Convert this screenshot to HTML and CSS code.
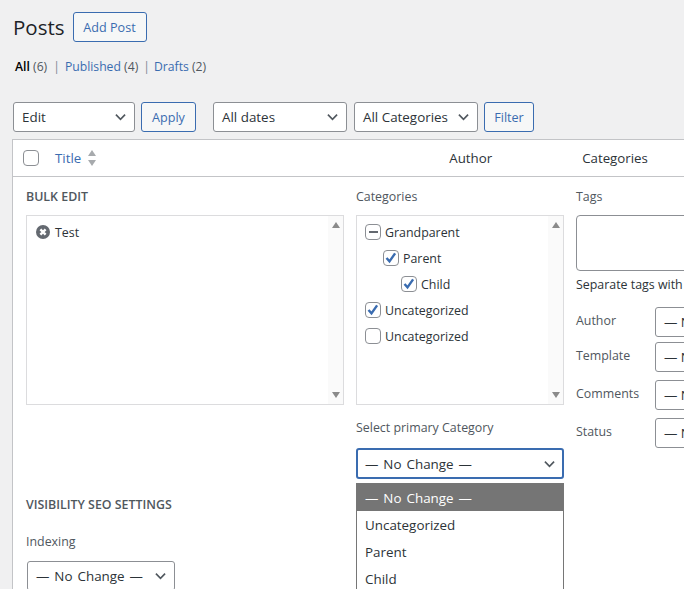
FILE: index.html
```html
<!DOCTYPE html>
<html lang="en">
<head>
    <meta charset="UTF-8">
    <meta name="viewport" content="width=device-width, initial-scale=1.0">
    <title>Posts</title>
    <link rel="stylesheet" href="styles.css">
</head>
<body>
    <div class="wrap">
        <div class="page-head">
            <h1>Posts</h1>
            <a class="btn add-post" href="#">Add Post</a>
        </div>

        <ul class="subsubsub">
            <li class="current">All <span class="count">(6)</span></li>
            <li class="sep">|</li>
            <li><a href="#">Published</a> <span class="count">(4)</span></li>
            <li class="sep sep-last">|</li>
            <li><a href="#">Drafts</a> <span class="count">(2)</span></li>
        </ul>

        <div class="tablenav">
            <div class="select select-edit">Edit<svg class="chev" viewBox="0 0 12 8"><path d="M1 1.5l5 5 5-5"/></svg></div>
            <a class="btn btn-apply" href="#">Apply</a>
            <div class="select select-dates">All dates<svg class="chev" viewBox="0 0 12 8"><path d="M1 1.5l5 5 5-5"/></svg></div>
            <div class="select select-cats">All Categories<svg class="chev" viewBox="0 0 12 8"><path d="M1 1.5l5 5 5-5"/></svg></div>
            <a class="btn btn-filter" href="#">Filter</a>
        </div>

        <div class="posts-table">
            <div class="table-head">
                <span class="check"></span>
                <a class="col-title" href="#">Title</a>
                <svg class="sort" viewBox="0 0 10 18"><path d="M5 1l4 6H1z"/><path d="M5 17L1 11h8z"/></svg>
                <span class="col-author">Author</span>
                <span class="col-cats">Categories</span>
            </div>

            <div class="bulk-edit">
                <div class="bulk-col col-left">
                    <h4>BULK EDIT</h4>
                    <div class="scroll-box title-box">
                        <div class="bulk-title">
                            <svg class="remove" viewBox="0 0 14 14"><circle cx="7" cy="7" r="7"/><path d="M4.4 4.4l5.2 5.2M9.6 4.4l-5.2 5.2"/></svg>
                            Test
                        </div>
                        <div class="scrollbar"><span class="arrow-up"></span><span class="arrow-down"></span></div>
                    </div>
                </div>

                <div class="bulk-col col-mid">
                    <div class="field-label">Categories</div>
                    <div class="scroll-box cat-box">
                        <ul class="cat-list">
                            <li><span class="check dash"></span>Grandparent</li>
                            <li class="level-1"><span class="check"><svg viewBox="0 0 16 16"><path d="M3.5 8l3 3.4 5.6-8"/></svg></span>Parent</li>
                            <li class="level-2"><span class="check"><svg viewBox="0 0 16 16"><path d="M3.5 8l3 3.4 5.6-8"/></svg></span>Child</li>
                            <li><span class="check"><svg viewBox="0 0 16 16"><path d="M3.5 8l3 3.4 5.6-8"/></svg></span>Uncategorized</li>
                            <li><span class="check"></span>Uncategorized</li>
                        </ul>
                        <div class="scrollbar"><span class="arrow-up"></span><span class="arrow-down"></span></div>
                    </div>
                </div>

                <div class="bulk-col col-right">
                    <div class="field-label">Tags</div>
                    <div class="tags-input"></div>
                    <div class="tags-hint">Separate tags with commas</div>
                    <div class="meta-row row-author"><span>Author</span><div class="select mini">— No Change —</div></div>
                    <div class="meta-row row-template"><span>Template</span><div class="select mini">— No Change —</div></div>
                    <div class="meta-row row-comments"><span>Comments</span><div class="select mini">— No Change —</div></div>
                    <div class="meta-row row-status"><span>Status</span><div class="select mini">— No Change —</div></div>
                </div>

                <div class="primary-cat">
                    <div class="field-label">Select primary Category</div>
                    <div class="select select-primary no-change">— No Change —<svg class="chev" viewBox="0 0 12 8"><path d="M1 1.5l5 5 5-5"/></svg></div>
                    <ul class="dropdown">
                        <li class="active no-change">— No Change —</li>
                        <li>Uncategorized</li>
                        <li>Parent</li>
                        <li>Child</li>
                    </ul>
                </div>

                <div class="seo-settings">
                    <h4>VISIBILITY SEO SETTINGS</h4>
                    <div class="field-label">Indexing</div>
                    <div class="select select-index no-change">— No Change —<svg class="chev" viewBox="0 0 12 8"><path d="M1 1.5l5 5 5-5"/></svg></div>
                </div>
            </div>
        </div>
    </div>
</body>
</html>
```

FILE: styles.css
```css
html, body {
    margin: 0;
    height: 589px;
    overflow: hidden;
}

body {
    background-color: #f0f0f1;
    color: #1d2327;
    font-family: "Open Sans", "Noto Sans", sans-serif;
    font-size: 13px;
}

a {
    color: #3a6cb0;
    text-decoration: none;
}

ul {
    list-style: none;
    margin: 0;
    padding: 0;
}

.wrap {
    width: 900px;
    padding: 12px 0 0 13px;
}

/* Header */
.page-head {
    display: flex;
    align-items: center;
    gap: 8px;
    height: 30px;
}

h1 {
    margin: 0;
    font-size: 20.5px;
    font-weight: 400;
}

.btn {
    box-sizing: border-box;
    display: flex;
    align-items: center;
    justify-content: center;
    height: 30px;
    border: 1px solid #3a6cb0;
    border-radius: 3px;
    background-color: #f6f7f7;
    font-size: 12.6px;
}

.add-post {
    width: 74px;
}

.subsubsub {
    display: flex;
    gap: 5px;
    margin: 16px 0 0 2px;
    height: 18px;
    line-height: 18px;
    font-size: 12.2px;
}

.subsubsub .current {
    font-weight: 600;
    color: #000;
}

.subsubsub .count {
    color: #50575e;
    font-weight: 400;
}

.subsubsub .sep {
    margin-left: 1px;
    color: #7d8794;
}

.subsubsub .sep-last {
    margin: 0 -1px 0 0;
}

/* Toolbar */
.tablenav {
    display: flex;
    margin-top: 26px;
    height: 30px;
}

.select {
    box-sizing: border-box;
    display: flex;
    align-items: center;
    justify-content: space-between;
    height: 30px;
    padding: 0 8px;
    background-color: #fff;
    border: 1px solid #8c8f94;
    border-radius: 3px;
    color: #2c3338;
    font-size: 13.4px;
    white-space: nowrap;
}

.no-change {
    word-spacing: 1.5px;
}

.chev {
    width: 11px;
    height: 8px;
    flex: none;
    fill: none;
    stroke: #50575e;
    stroke-width: 1.8;
}

.select-edit {
    width: 122px;
}

.btn-apply {
    width: 55px;
    margin-left: 6px;
}

.select-dates {
    width: 134px;
    margin-left: 17px;
}

.select-cats {
    width: 124px;
    margin-left: 7px;
}

.btn-filter {
    width: 50px;
    margin-left: 6px;
}

/* Table */
.posts-table {
    box-sizing: border-box;
    margin: 7px 0 0 -1px;
    background-color: #fff;
    border: 1px solid #c3c4c7;
    height: 600px;
}

.table-head {
    display: flex;
    align-items: center;
    height: 36px;
    border-bottom: 1px solid #c3c4c7;
    font-size: 13.3px;
    color: #2c3338;
}

.check {
    box-sizing: border-box;
    display: inline-flex;
    align-items: center;
    justify-content: center;
    flex: none;
    width: 16px;
    height: 16px;
    background-color: #fff;
    border: 1px solid #8c8f94;
    border-radius: 4px;
}

.check svg {
    width: 16px;
    height: 16px;
    flex: none;
    fill: none;
    stroke: #3a6cb0;
    stroke-width: 2.4;
}

.check.dash::before {
    content: "";
    width: 9px;
    height: 2px;
    background-color: #646970;
}

.table-head .check {
    margin-left: 10px;
}

.col-title {
    margin-left: 16px;
}

.sort {
    width: 10px;
    height: 18px;
    margin-left: 6px;
    fill: #a7aaad;
}

.col-author {
    margin-left: 352px;
}

.col-cats {
    margin-left: 90px;
}

/* Bulk edit panel */
.bulk-edit {
    display: grid;
    grid-template-columns: 318px 208px 300px;
    column-gap: 12px;
    grid-template-rows: 231px auto;
    padding: 10px 0 0 13px;
    font-size: 12.4px;
    color: #50575e;
}

h4 {
    margin: 0;
    height: 19px;
    line-height: 19px;
    font-size: 12.4px;
    font-weight: 600;
    color: #50575e;
}

.field-label {
    height: 19px;
    line-height: 19px;
}

.scroll-box {
    box-sizing: border-box;
    display: flex;
    justify-content: space-between;
    height: 190px;
    margin-top: 9px;
    border: 1px solid #dcdcde;
}

.scrollbar {
    display: flex;
    flex-direction: column;
    justify-content: space-between;
    align-items: center;
    box-sizing: border-box;
    width: 15px;
    padding: 6px 0;
    background-color: #fafafa;
}

.arrow-up, .arrow-down {
    width: 0;
    height: 0;
    border-left: 4px solid transparent;
    border-right: 4px solid transparent;
}

.arrow-up {
    border-bottom: 6px solid #8a8a8a;
}

.arrow-down {
    border-top: 6px solid #8a8a8a;
}

.bulk-title {
    display: flex;
    align-items: center;
    gap: 5px;
    height: 18px;
    margin: 7px 0 0 9px;
    color: #2c3338;
}

.remove {
    width: 14px;
    height: 14px;
}

.remove circle {
    fill: #646970;
}

.remove path {
    stroke: #fff;
    stroke-width: 2.4;
}

.cat-list {
    padding: 3px 0 0 8px;
    color: #2c3338;
}

.cat-list li {
    display: flex;
    align-items: center;
    gap: 4px;
    height: 26px;
}

.cat-list .level-1 {
    padding-left: 18px;
}

.cat-list .level-2 {
    padding-left: 36px;
}

.tags-input {
    box-sizing: border-box;
    width: 300px;
    height: 56px;
    margin-top: 9px;
    background-color: #fff;
    border: 1px solid #8c8f94;
    border-radius: 4px;
}

.tags-hint {
    margin-top: 4px;
    height: 19px;
    line-height: 19px;
    white-space: nowrap;
    color: #2c3338;
}

.meta-row {
    display: flex;
    align-items: center;
    height: 30px;
}

.meta-row span {
    width: 79px;
    margin-top: -3px;
}

.mini {
    width: 120px;
    color: #2c3338;
}

.row-author {
    margin-top: 13px;
}

.row-template {
    margin-top: 5px;
}

.row-comments, .row-status {
    margin-top: 8px;
}

.primary-cat {
    grid-column: 2;
    grid-row: 2;
}

.select-primary {
    margin-top: 11px;
    height: 31px;
    border: 2px solid #3a6cb0;
    padding: 0 7px;
}

.dropdown {
    box-sizing: border-box;
    margin-top: 4px;
    background-color: #fff;
    border: 1px solid #767676;
    border-bottom: none;
    color: #2c3338;
    font-size: 13.4px;
}

.dropdown li {
    height: 27px;
    line-height: 29px;
    padding-left: 8px;
}

.dropdown .active {
    background-color: #757575;
    color: #fff;
}

.seo-settings {
    grid-column: 1;
    grid-row: 2;
    padding-top: 77px;
}

.seo-settings .field-label {
    margin-top: 18px;
}

.select-index {
    width: 148px;
    margin: 10px 0 0 1px;
}
```
